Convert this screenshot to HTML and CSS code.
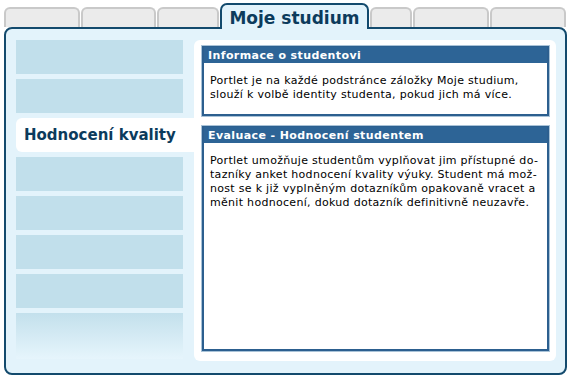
FILE: index.html
```html
<!DOCTYPE html>
<html lang="cs">
<head>
<meta charset="utf-8">
<title>Moje studium</title>
<link rel="stylesheet" href="styles.css">
</head>
<body>
<div class="page">
  <div class="tabs">
    <div class="tab tab-w76"></div>
    <div class="tab tab-w75"></div>
    <div class="tab tab-w63"></div>
    <div class="tab-active">Moje studium</div>
    <div class="tab tab-w43"></div>
    <div class="tab tab-w77"></div>
    <div class="tab tab-w76"></div>
  </div>
  <div class="panel">
    <div class="menu">
      <div class="item"></div>
      <div class="item"></div>
      <div class="item item-active">Hodnocení kvality</div>
      <div class="item"></div>
      <div class="item"></div>
      <div class="item"></div>
      <div class="item"></div>
      <div class="item item-fade"></div>
    </div>
    <div class="content">
      <div class="portlet">
        <div class="portlet-head">Informace o studentovi</div>
        <div class="portlet-body">
          <span class="line">Portlet je na každé podstránce záložky Moje studium,</span>
          <span class="line">slouží k volbě identity studenta, pokud jich má více.</span>
        </div>
      </div>
      <div class="portlet portlet-grow">
        <div class="portlet-head">Evaluace - Hodnocení studentem</div>
        <div class="portlet-body">
          <span class="line">Portlet umožňuje studentům vyplňovat jim přístupné do-</span>
          <span class="line">tazníky anket hodnocení kvality výuky. Student má mož-</span>
          <span class="line">nost se k již vyplněným dotazníkům opakovaně vracet a</span>
          <span class="line">měnit hodnocení, dokud dotazník definitivně neuzavře.</span>
        </div>
      </div>
    </div>
  </div>
</div>
</body>
</html>
```

FILE: styles.css
```css
html, body {
  margin: 0;
  padding: 0;
  background: #ffffff;
}

body {
  font-family: "DejaVu Sans", Verdana, sans-serif;
  color: #000;
}

.page {
  width: 563px;
  padding: 3px 0 0 4px;
}

.tabs {
  display: flex;
  align-items: flex-end;
  height: 24px;
}

.tab {
  box-sizing: border-box;
  height: 20px;
  background: #ebebeb;
  border: 2px solid #c9c9c9;
  border-bottom: none;
  border-radius: 6px 6px 0 0;
  margin-right: 1px;
}

.tab-w76 { width: 76px; }
.tab-w75 { width: 75px; }
.tab-w63 { width: 62px; }
.tab-w43 { width: 42px; }
.tab-w77 { width: 76px; }

.tab-active {
  position: relative;
  z-index: 1;
  box-sizing: border-box;
  width: 150px;
  height: 26px;
  margin-bottom: -2px;
  margin-right: 1px;
  padding-top: 3px;
  background: #e3f3fb;
  border: 2px solid #134a6d;
  border-bottom: none;
  border-radius: 7px 7px 0 0;
  color: #0c3b5c;
  font-weight: bold;
  font-size: 17px;
  line-height: 20px;
  text-align: center;
}

.panel {
  box-sizing: border-box;
  display: flex;
  width: 563px;
  height: 348px;
  padding: 11px 9px 12px 10px;
  background: #e3f3fb;
  border: 2px solid #134a6d;
  border-radius: 8px;
}

.menu {
  width: 178px;
  flex: none;
  display: flex;
  flex-direction: column;
  gap: 5px;
}

.item {
  width: 167px;
  height: 34px;
  background: #c1dfeb;
}

.item-active {
  box-sizing: border-box;
  width: 178px;
  background: #ffffff;
  border-radius: 6px 0 0 6px;
  padding-left: 8px;
  color: #0c3b5c;
  font-weight: bold;
  font-size: 15px;
  line-height: 34px;
}

.item-fade {
  height: 46px;
  background: linear-gradient(#c3e0ec, #e6f5fc);
}

.content {
  flex: 1;
  display: flex;
  flex-direction: column;
  gap: 10px;
  padding: 6px 7px 10px 8px;
  background: #ffffff;
  border-radius: 6px;
}

.portlet {
  border: 2px solid #2c5f8f;
  box-shadow: 0 0 0 1px #a9c3d8;
  display: flex;
  flex-direction: column;
}

.portlet-grow {
  flex: 1;
}

.portlet-head {
  height: 16px;
  margin-top: -1px;
  padding-left: 4px;
  background: #2d6496;
  color: #ffffff;
  font-weight: bold;
  font-size: 11px;
  line-height: 17px;
  letter-spacing: 0.4px;
}

.portlet-body {
  padding: 11px 6px 12px 6px;
  font-size: 11px;
  line-height: 14px;
  letter-spacing: 0.3px;
  color: #000;
}

.line {
  display: block;
  white-space: nowrap;
}
```
